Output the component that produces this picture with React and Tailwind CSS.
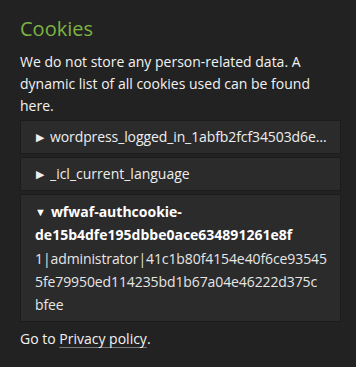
export default function App() {
  return (
    <div className="min-h-[367px] w-[356px] bg-[#222222] pl-5 pr-[15px] pt-[14px] text-white" style={{ fontFamily: '"Open Sans", sans-serif' }}>
      <h2 className="text-[20px] leading-[30px] text-[#7cb342]">Cookies</h2>
      <p className="mt-[7px] text-[14px] leading-[22px] text-[#f2f2f2]">
        We do not store any person-related data. A dynamic list of all cookies used can be found here.
      </p>
      <div className="mt-[3px] flex flex-col gap-[3px] text-[14px]">
        <div className="border border-[#1c1c1c] bg-[#2b2b2b] py-[5px] pl-[15px] pr-[8px] leading-[22px]">
          <div className="flex items-center text-[#eeeeee]">
            <span className="mr-[6px] text-[11px]">▶</span>
            <span className="truncate tracking-[-0.1px]">wordpress_logged_in_1abfb2fcf34503d6e0a41c1b80f4154e40f6ce93545</span>
          </div>
        </div>
        <div className="border border-[#1c1c1c] bg-[#2b2b2b] py-[5px] pl-[15px] pr-[8px] leading-[22px]">
          <div className="flex items-center text-[#eeeeee]">
            <span className="mr-[6px] text-[11px]">▶</span>
            <span className="truncate">_icl_current_language</span>
          </div>
        </div>
        <div className="border border-[#1c1c1c] bg-[#2b2b2b] py-[5px] pl-[14px] pr-[8px] leading-[23px]">
          <div className="break-all font-bold text-white">
            <span className="mr-[5px] align-[1px] text-[11px]">▼</span>
            wfwaf-authcookie-<br />de15b4dfe195dbbe0ace634891261e8f
          </div>
          <div className="mt-px whitespace-nowrap tracking-[-0.1px] text-[#e6e6e6]">
            1|administrator|41c1b80f4154e40f6ce93545<br />
            5fe79950ed114235bd1b67a04e46222d375c<br />
            bfee
          </div>
        </div>
      </div>
      <p className="mt-[6px] text-[14px] leading-[22px] text-[#f2f2f2]">
        Go to <a href="#" className="underline decoration-[#777777] underline-offset-[3px]">Privacy policy</a>.
      </p>
    </div>
  );
}
